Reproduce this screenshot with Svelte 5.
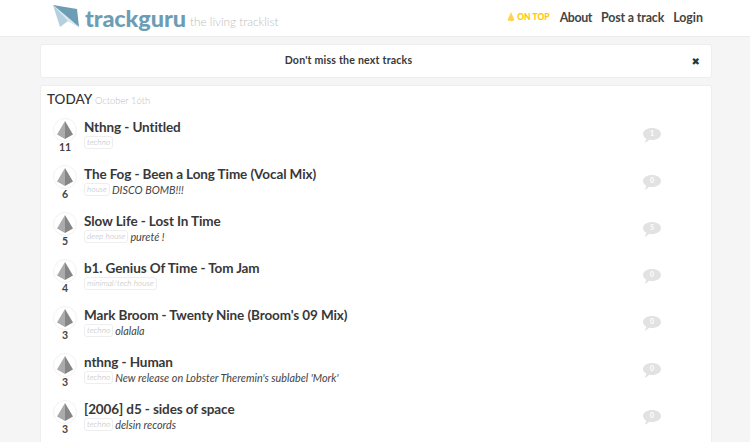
<script>
  const tracks = [
    { votes: 11, title: 'Nthng - Untitled', tag: 'techno', note: '', c: 1 },
    { votes: 6, title: 'The Fog - Been a Long Time (Vocal Mix)', tag: 'house', note: 'DISCO BOMB!!!', c: 0 },
    { votes: 5, title: 'Slow Life - Lost In Time', tag: 'deep house', note: 'pureté !', c: 5 },
    { votes: 4, title: 'b1. Genius Of Time - Tom Jam', tag: 'minimal/tech house', note: '', c: 0 },
    { votes: 3, title: "Mark Broom - Twenty Nine (Broom's 09 Mix)", tag: 'techno', note: 'olalala', c: 0 },
    { votes: 3, title: 'nthng - Human', tag: 'techno', note: "New release on Lobster Theremin's sublabel 'Mork'", c: 0 },
    { votes: 3, title: '[2006] d5 - sides of space', tag: 'techno', note: 'delsin records', c: 0 }
  ];
</script>

<header>
  <div class="brand">
    <svg class="logo" width="26" height="23" viewBox="0 0 26 23">
      <path d="M0 0 L26 22 L15 16 L7 22 Z" fill="#b5d0de" />
      <path d="M0 0 L24 4 L26 22 Z" fill="#6d9db5" />
      <path d="M0 0 L26 22 L15 16 Z" fill="#dbe8ef" />
    </svg>
    <span class="name">trackguru</span>
    <span class="tagline">the living tracklist</span>
  </div>
  <nav>
    <span class="ontop">
      <svg width="8" height="10" viewBox="0 0 8 10"><path d="M4 0 L7.5 8 Q4 10.5 .5 8 Z" fill="#ffd257" /></svg>
      ON TOP
    </span>
    <span class="link about">About</span>
    <span class="link post">Post a track</span>
    <span class="link">Login</span>
  </nav>
</header>

<main>
  <section class="banner">
    <strong>Don't miss the next tracks</strong>
    <span class="close">✖</span>
  </section>

  <section class="card">
    <h2>TODAY <small>October 16th</small></h2>
    {#each tracks as t}
      <article>
        <div class="vote">
          <span class="circle">
            <svg width="16" height="18" viewBox="0 0 16 18">
              <path d="M8 0 L0 13.5 L8 18 Z" fill="#ababab" />
              <path d="M8 0 L16 13.5 L8 18 Z" fill="#868686" />
            </svg>
          </span>
          <span class="count">{t.votes}</span>
        </div>
        <div class="body">
          <h3>{t.title}</h3>
          <p><span class="tag">{t.tag}</span>{#if t.note}<em>{t.note}</em>{/if}</p>
        </div>
        <div class="comments">
          <svg width="18" height="15" viewBox="0 0 18 15">
            <path d="M9 0 C14 0 18 2.6 18 6 C18 9.4 14 12 9 12 C8 12 7 12 6 11.7 C5 13 3.5 14.3 1.5 14.6 C2.6 13.4 3.2 12 3.2 10.6 C1.2 9.5 0 7.9 0 6 C0 2.6 4 0 9 0 Z" fill="#e2e2e2" />
          </svg>
          <span>{t.c}</span>
        </div>
      </article>
    {/each}
  </section>
</main>

<style>
  :global(body) {
    margin: 0;
    background: #f5f5f5;
    font-family: Lato, "Open Sans", sans-serif;
    color: #383838;
    overflow: hidden;
  }
  header {
    height: 36px;
    background: #fff;
    border-bottom: 1px solid #ececec;
    display: flex;
    align-items: center;
    justify-content: space-between;
    padding: 0 47px 0 53px;
  }
  .brand { display: flex; align-items: center; }
  .logo { margin: 0 6px 4px 0; }
  .name {
    font-size: 23.5px;
    font-weight: 900;
    color: #6d9db5;
    line-height: 36px;
    margin-top: -1px;
    letter-spacing: -0.1px;
  }
  .tagline {
    font-size: 11.8px;
    font-weight: 300;
    color: #bdbdbd;
    margin: 7px 0 0 4px;
  }
  nav { display: flex; align-items: center; margin-top: -2px; }
  .ontop {
    display: flex;
    align-items: center;
    gap: 2px;
    font-size: 8.4px;
    font-weight: 900;
    color: #ffc800;
    letter-spacing: 0.1px;
    margin-right: 10px;
  }
  .link { font-size: 12.4px; font-weight: 700; color: #444; }
  .about { margin-right: 9px; letter-spacing: -0.4px; }
  .post { margin-right: 9px; letter-spacing: -0.15px; }
  main {
    padding: 7px 38px 0 40px;
    display: flex;
    flex-direction: column;
    gap: 7px;
  }
  .banner, .card {
    background: #fff;
    border: 1px solid #eee;
    border-radius: 3px;
  }
  .banner {
    height: 32px;
    display: flex;
    align-items: center;
    justify-content: center;
    position: relative;
    font-size: 10.6px;
  }
  .banner strong {
    font-weight: 700;
    letter-spacing: 0.2px;
    margin: -2px 55px 0 0;
  }
  .close {
    position: absolute;
    right: 11px;
    top: 11px;
    font-size: 10px;
    line-height: 12px;
    font-family: "DejaVu Sans", sans-serif;
    color: #333;
  }
  .card { padding: 5px 6px 0; }
  h2 {
    margin: 0 0 9px;
    font-size: 13.5px;
    line-height: 16px;
    font-weight: 500;
    color: #333;
  }
  h2 small {
    font-size: 9.4px;
    font-weight: 300;
    color: #bbb;
  }
  article {
    height: 47px;
    display: flex;
    padding-left: 6px;
  }
  .vote {
    width: 24px;
    margin-right: 7px;
    display: flex;
    flex-direction: column;
    align-items: center;
  }
  .circle {
    width: 24px;
    height: 24px;
    border-radius: 50%;
    border: 1px solid #f2f2f2;
    box-sizing: border-box;
    display: flex;
    align-items: center;
    justify-content: center;
  }
  .count {
    font-size: 10.5px;
    font-weight: 700;
    color: #444;
    line-height: 14px;
    margin-top: -2px;
  }
  .body { flex: 1; padding-top: 1px; }
  h3 {
    margin: 0;
    font-size: 13.5px;
    line-height: 17px;
    font-weight: 700;
    letter-spacing: -0.1px;
    color: #383838;
  }
  p {
    margin: 0;
    display: flex;
    align-items: center;
    font-size: 10.8px;
    line-height: 13px;
  }
  .tag {
    border: 1px solid #eee;
    border-radius: 3px;
    font-size: 8.3px;
    font-style: italic;
    font-weight: 300;
    color: #b5b5b5;
    padding: 0 2px;
    height: 11px;
    line-height: 11px;
    margin-right: 2px;
  }
  em { color: #444; font-weight: 400; }
  .comments {
    position: relative;
    width: 18px;
    margin: 9px 44px 0 0;
  }
  .comments span {
    position: absolute;
    left: 0;
    width: 18px;
    top: 1px;
    text-align: center;
    font-size: 7px;
    line-height: 10px;
    font-weight: 700;
    color: #fff;
  }
</style>
